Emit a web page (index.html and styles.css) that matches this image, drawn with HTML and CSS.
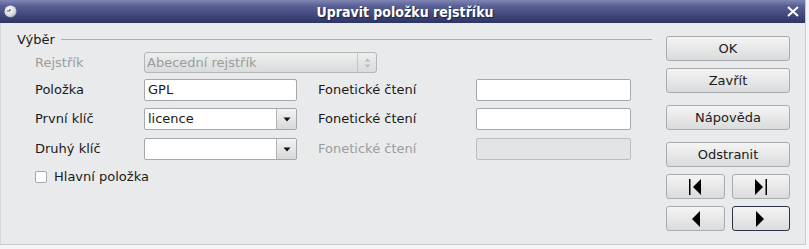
FILE: index.html
```html
<!DOCTYPE html>
<html lang="cs">
<head>
  <meta charset="UTF-8" />
  <title>Upravit položku rejstříku</title>
  <link rel="stylesheet" href="styles.css">
</head>
<body>
  <div class="window">
    <div class="titlebar">
      <svg class="win-icon" width="13" height="13" viewBox="0 0 13 13">
        <defs>
          <radialGradient id="ball" cx="0.4" cy="0.35" r="0.7">
            <stop offset="0" stop-color="#ffffff"/>
            <stop offset="0.7" stop-color="#d8d8dc"/>
            <stop offset="1" stop-color="#8e92a8"/>
          </radialGradient>
        </defs>
        <circle cx="6.5" cy="6.5" r="6" fill="url(#ball)"/>
        <path d="M3 6 L6 6 M6 6 L6 4" stroke="#555" stroke-width="1.2" fill="none"/>
      </svg>
      <span class="title">Upravit položku rejstříku</span>
      <svg class="close" width="12" height="11" viewBox="0 0 12 11">
        <path d="M1 1 L11 10 M11 1 L1 10" stroke="#fff" stroke-width="2"/>
      </svg>
    </div>

    <div class="content">
      <section class="selection">
        <div class="group-head">
          <span>Výběr</span>
          <div class="rule"></div>
        </div>

        <div class="grid">
          <label class="lbl disabled">Rejstřík</label>
          <div class="spin disabled">
            <span class="spin-text">Abecední rejstřík</span>
            <span class="spin-arrows">
              <svg width="7" height="12" viewBox="0 0 7 12">
                <path d="M0.5 4.5 L3.5 1.5 L6.5 4.5 Z M0.5 7.5 L3.5 10.5 L6.5 7.5 Z" fill="#b7bbbf"/>
              </svg>
            </span>
          </div>
          <span></span>
          <span></span>

          <label class="lbl">Položka</label>
          <div class="field">GPL</div>
          <label class="lbl second">Fonetické čtení</label>
          <div class="field"></div>

          <label class="lbl">První klíč</label>
          <div class="combo">
            <span class="combo-text">licence</span>
            <span class="combo-btn">
              <svg width="8" height="5" viewBox="0 0 8 5"><path d="M0.5 0.5 L7.5 0.5 L4 4.5 Z" fill="#111"/></svg>
            </span>
          </div>
          <label class="lbl second">Fonetické čtení</label>
          <div class="field"></div>

          <label class="lbl">Druhý klíč</label>
          <div class="combo">
            <span class="combo-text"></span>
            <span class="combo-btn">
              <svg width="8" height="5" viewBox="0 0 8 5"><path d="M0.5 0.5 L7.5 0.5 L4 4.5 Z" fill="#111"/></svg>
            </span>
          </div>
          <label class="lbl second disabled">Fonetické čtení</label>
          <div class="field disabled"></div>
        </div>

        <label class="check">
          <span class="box"></span>
          Hlavní položka
        </label>
      </section>

      <div class="buttons">
        <button class="btn">OK</button>
        <button class="btn">Zavřít</button>
        <button class="btn spaced">Nápověda</button>
        <button class="btn spaced">Odstranit</button>
        <div class="nav">
          <button class="btn">
            <svg width="13" height="16" viewBox="0 0 13 16"><rect x="0" y="0" width="1.5" height="16" fill="#000"/><path d="M12 0 L4 8 L12 16 Z" fill="#000"/></svg>
          </button>
          <button class="btn">
            <svg width="13" height="16" viewBox="0 0 13 16"><path d="M1 0 L9 8 L1 16 Z" fill="#000"/><rect x="11.5" y="0" width="1.5" height="16" fill="#000"/></svg>
          </button>
        </div>
        <div class="nav">
          <button class="btn">
            <svg width="9" height="16" viewBox="0 0 9 16"><path d="M9 0 L1 8 L9 16 Z" fill="#000"/></svg>
          </button>
          <button class="btn focused">
            <svg width="9" height="16" viewBox="0 0 9 16"><path d="M0 0 L8 8 L0 16 Z" fill="#000"/></svg>
          </button>
        </div>
      </div>
    </div>
  </div>
</body>
</html>
```

FILE: styles.css
```css
body {
  margin: 0;
  width: 809px;
  height: 249px;
  overflow: hidden;
  background: #f4f5f7;
  font-family: 'DejaVu Sans', sans-serif;
  font-size: 13px;
  color: #1a1a1a;
}

.window {
  width: 806px;
  height: 245px;
  display: flex;
  flex-direction: column;
  background: #e9eaeb;
  border-right: 1px solid #c6cad2;
  border-bottom: 1px solid #c6cad2;
  box-sizing: border-box;
}

.titlebar {
  height: 23px;
  flex: none;
  display: flex;
  align-items: center;
  padding: 0 4px 0 4px;
  background: linear-gradient(#8186b3 0%, #5a6196 25%, #3e4578 70%, #2e3464 100%);
  color: #fff;
}

.win-icon {
  flex: none;
}

.title {
  flex: 1;
  text-align: center;
  font-family: 'DejaVu Sans Condensed', 'DejaVu Sans', sans-serif;
  font-weight: bold;
  font-size: 14px;
  text-shadow: 1px 1px 1px #1d2244;
  padding-left: 6px;
}

.close {
  flex: none;
  margin-right: 2px;
}

.content {
  flex: 1;
  display: flex;
  padding: 8px 15px 0 16px;
  border-left: 1px solid #d6d8dc;
}

.selection {
  width: 635px;
  flex: none;
}

.group-head {
  height: 16px;
  display: flex;
  align-items: center;
  gap: 6px;
}

.rule {
  flex: 1;
  height: 1px;
  background: #a9abae;
  margin-top: 1px;
}

.grid {
  margin: 5px 0 0 18px;
  display: grid;
  grid-template-columns: 109px 153px 179px 155px;
  grid-template-rows: 27px 29px 30px 22px;
  align-items: start;
}

.lbl {
  line-height: 21px;
  white-space: nowrap;
}

.lbl.second {
  padding-left: 21px;
}

.disabled {
  color: #9b9c9e;
}

.field {
  height: 22px;
  box-sizing: border-box;
  background: #fff;
  border: 1px solid #a5a7aa;
  border-radius: 2px;
  padding: 0 3px;
  line-height: 20px;
}

.field.disabled {
  background: #e3e4e5;
  border-color: #bbbdc0;
}

.spin {
  width: 233px;
  height: 21px;
  box-sizing: border-box;
  display: flex;
  border: 1px solid #b4b7ba;
  border-radius: 3px;
  background: linear-gradient(#eeefef, #d9dbdc);
}

.spin-text {
  flex: 1;
  padding-left: 2px;
  line-height: 19px;
}

.spin-arrows {
  width: 18px;
  border-left: 1px solid #c3c6c9;
  display: flex;
  align-items: center;
  justify-content: center;
}

.combo {
  height: 22px;
  box-sizing: border-box;
  display: flex;
  background: #fff;
  border: 1px solid #a5a7aa;
  border-radius: 2px;
}

.combo-text {
  flex: 1;
  padding-left: 3px;
  line-height: 20px;
}

.combo-btn {
  width: 19px;
  border-left: 1px solid #b0b2b5;
  background: linear-gradient(#f3f3f3, #d6d8d9);
  display: flex;
  align-items: center;
  justify-content: center;
}

.check {
  margin: 9px 0 0 18px;
  display: flex;
  align-items: center;
  gap: 7px;
  line-height: 15px;
}

.box {
  width: 12px;
  height: 12px;
  box-sizing: border-box;
  background: #fff;
  border: 1px solid #a5a7aa;
  border-radius: 2px;
}

.buttons {
  margin-left: 14px;
  margin-top: 5px;
  width: 124px;
  display: flex;
  flex-direction: column;
  gap: 7px;
}

.btn {
  height: 25px;
  box-sizing: border-box;
  border: 1px solid #a9abae;
  border-radius: 3px;
  background: linear-gradient(#f4f4f4, #dadbdc);
  font-family: 'DejaVu Sans', sans-serif;
  font-size: 13px;
  color: #1a1a1a;
  padding: 0;
  display: flex;
  align-items: center;
  justify-content: center;
}

.btn.spaced {
  margin-top: 5px;
}

.btn.focused {
  border-color: #2c3346;
}

.nav {
  display: flex;
  gap: 7px;
}

.nav .btn {
  flex: 1;
}
```
